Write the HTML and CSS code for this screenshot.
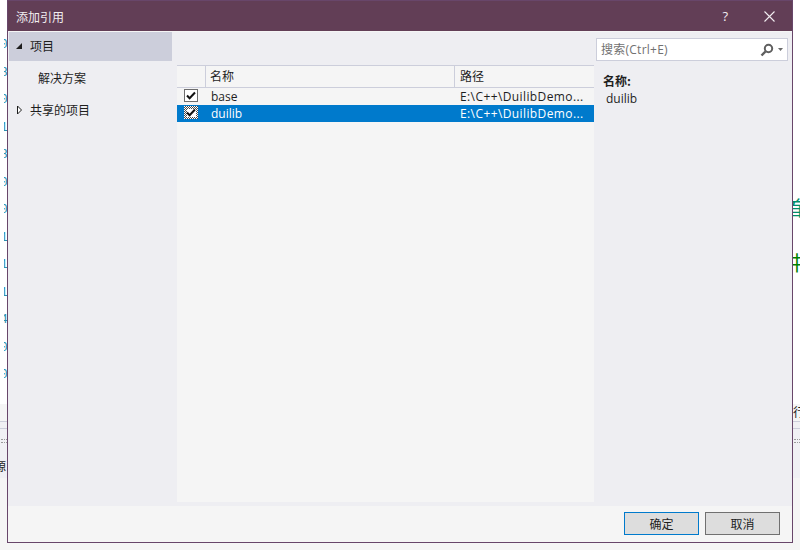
FILE: index.html
```html
<!DOCTYPE html>
<html lang="zh">
<head>
<meta charset="utf-8">
<title>添加引用</title>
<link rel="stylesheet" href="styles.css">
</head>
<body>
<div class="backdrop">
  <div class="editor">
    <div class="gutter-digits">
      <span>0</span><span>8</span><span>0</span><span>1</span><span>8</span><span>0</span><span>0</span><span>1</span><span>1</span><span>1</span><span>4</span><span>0</span><span>0</span>
    </div>
    <span class="code-a">首</span>
    <span class="code-b">中</span>
  </div>
  <div class="tabbar"><span class="tab-right">行</span></div>
  <div class="strip"></div>
  <div class="panel">
    <span class="grip grip-left"></span>
    <span class="grip grip-right"></span>
    <span class="panel-text">源</span>
  </div>
  <div class="lower"></div>
</div>

<div class="dialog">
  <header class="titlebar">
    <span class="title">添加引用</span>
    <span class="help">?</span>
    <svg class="close" width="11" height="11" viewBox="0 0 11 11"><path d="M.5.500l10 10M10.500.500l-10 10" stroke="#f1edf0" stroke-width="1.100" fill="none"/></svg>
  </header>
  <div class="body">
    <nav class="nav">
      <div class="nav-row nav-selected">
        <svg class="arrow" width="8" height="8" viewBox="0 0 8 8"><path d="M7 1v6H1z" fill="#1e1e1e"/></svg>
        <span>项目</span>
      </div>
      <div class="nav-row nav-child"><span>解决方案</span></div>
      <div class="nav-row">
        <svg class="arrow" width="8" height="10" viewBox="0 0 8 10"><path d="M2.500 1l4 4-4 4z" fill="#fff" stroke="#1e1e1e"/></svg>
        <span>共享的项目</span>
      </div>
    </nav>
    <main class="center">
      <div class="list">
        <div class="list-head">
          <div class="cell-check"></div>
          <div class="cell-name">名称</div>
          <div class="cell-path">路径</div>
        </div>
        <div class="list-row">
          <div class="cell-check">
            <svg width="14" height="13" viewBox="0 0 14 13"><rect x=".5" y=".5" width="13" height="12" fill="#fff" stroke="#6d6d6d"/><path d="M3 6.500l2.600 2.800L11 3.500" fill="none" stroke="#111" stroke-width="2"/></svg>
          </div>
          <div class="cell-name">base</div>
          <div class="cell-path">E:\C++\DuilibDemo...</div>
        </div>
        <div class="list-row list-selected">
          <div class="cell-check">
            <svg width="14" height="13" viewBox="0 0 14 13"><defs><pattern id="dots" width="2" height="2" patternUnits="userSpaceOnUse"><rect width="1" height="1" fill="#fff"/><rect x="1" y="1" width="1" height="1" fill="#fff"/></pattern></defs><rect width="14" height="13" fill="#4a4a4a"/><rect width="14" height="13" fill="url(#dots)"/><rect x="3" y="3" width="9" height="8" fill="#fff"/><path d="M3 6.500l2.600 2.800L11 3.500" fill="none" stroke="#111" stroke-width="2"/></svg>
          </div>
          <div class="cell-name">duilib</div>
          <div class="cell-path">E:\C++\DuilibDemo...</div>
        </div>
      </div>
    </main>
    <aside class="side">
      <div class="search">
        <span class="search-text">搜索(Ctrl+E)</span>
        <svg class="search-icon" width="14" height="14" viewBox="0 0 14 14"><circle cx="8.500" cy="5.500" r="3.700" fill="none" stroke="#5f5f5f" stroke-width="2"/><path d="M5.500 8.500L1.500 12.500" stroke="#5f5f5f" stroke-width="2.400"/></svg>
        <svg class="search-drop" width="5" height="3" viewBox="0 0 5 3"><path d="M0 0h5L2.500 3z" fill="#6a6a6a"/></svg>
      </div>
      <div class="detail-label">名称:</div>
      <div class="detail-value">duilib</div>
    </aside>
  </div>
  <footer class="footer">
    <button class="btn btn-default" type="button">确定</button>
    <button class="btn" type="button">取消</button>
  </footer>
</div>
</body>
</html>
```
FILE: styles.css
```css
* { box-sizing: border-box; }
html, body { margin: 0; padding: 0; }
body {
  width: 800px;
  height: 550px;
  overflow: hidden;
  background: #fff;
  position: relative;
  font-family: "Open Sans", "Noto Sans CJK SC", sans-serif;
  font-size: 12px;
  color: #1e1e1e;
}
.backdrop { display: flex; flex-direction: column; height: 550px; }
.editor { height: 404px; flex: none; position: relative; overflow: hidden; }
.gutter-digits {
  position: absolute; left: 4px; top: 31px; width: 3px; overflow: hidden;
  display: flex; flex-direction: column;
  font: 13px/27.500px "Liberation Mono", monospace; color: #2b91af;
}
.gutter-digits span { display: block; height: 27.500px; margin-left: -4px; }
.code-a, .code-b {
  position: absolute; font-family: "Noto Sans CJK SC", sans-serif;
  font-size: 20px; line-height: 24px;
}
.code-a { left: 784px; top: 196px; color: #008f6b; }
.code-b { left: 787px; top: 251px; color: #008000; }
.tabbar { height: 18px; flex: none; background: #f5f5f5; border-bottom: 1px solid #cccedb; position: relative; }
.tab-right { position: absolute; left: 793px; top: -1px; font-family: "Noto Sans CJK SC", sans-serif; font-size: 12px; line-height: 18px; }
.strip { height: 7px; flex: none; background: #f0f0f4; border-bottom: 1px solid #cccedb; }
.panel { height: 49px; flex: none; background: #f0f0f4; position: relative; overflow: hidden; }
.grip {
  position: absolute; top: 10px; width: 6px; height: 4px;
  border-top: 1px dotted #9a9a9a; border-bottom: 1px dotted #9a9a9a;
}
.grip-left { left: 1px; }
.grip-right { left: 794px; }
.panel-text { position: absolute; left: -6px; top: 29px; font-family: "Noto Sans CJK SC", sans-serif; color: #1e1e1e; line-height: 16px; }
.lower { flex: 1; background: #f5f5f5; }

.dialog {
  position: absolute; left: 7px; top: 0; width: 786px; height: 543px;
  border: 1px solid #68466a;
  background: #f5f5f5;
  display: flex; flex-direction: column;
}
.titlebar {
  height: 30px; flex: none; background: #623e56; color: #f1edf0;
  display: flex; align-items: center; padding: 0 17px 0 8px;
  font-family: "Noto Sans CJK SC", sans-serif;
}
.title { flex: 1; font-size: 12px; }
.help { margin-right: 36px; font-family: "Open Sans", sans-serif; font-size: 13px; }
.close { display: block; }
.body { flex: 1; min-height: 0; background: #eeeef2; display: flex; border-top: 1px solid #f5f5f5; }
.nav { width: 169px; flex: none; padding-left: 1px; font-family: "Noto Sans CJK SC", sans-serif; }
.nav-row { height: 32px; display: flex; align-items: center; width: 163px; padding: 0 0 1px 6px; }
.nav-selected { height: 29px; background: #cccedb; margin-bottom: 1px; padding-bottom: 2px; }
.nav-child { padding-left: 29px; padding-bottom: 2px; }
.arrow { margin-right: 7px; width: 8px; flex: none; }
.center { width: 417px; flex: none; padding: 33px 0 5px; }
.list { height: 437px; background: #f5f5f5; }
.list-head { display: flex; height: 23px; border-top: 1px solid #cccedb; border-bottom: 1px solid #cccedb; align-items: stretch; font-family: "Noto Sans CJK SC", sans-serif; }
.list-head .cell-name, .list-head .cell-path { padding-top: 0; line-height: 20px; }
.list-head .cell-name { padding-left: 4px; }
.list-head .cell-path { padding-left: 5px; border-left: 1px solid #cccedb; }
.list-head .cell-check { border-right: 1px solid #cccedb; }
.list-row { display: flex; height: 17px; line-height: 17px; align-items: center; }
.list-selected { background: #007acc; color: #fff; }
.cell-check { width: 29px; padding-left: 7px; flex: none; display: flex; align-items: flex-start; align-self: stretch; padding-top: 1px; }
.cell-check svg { display: block; }
.cell-name { width: 248px; flex: none; padding-left: 5px; }
.cell-path { flex: 1; padding-left: 6px; white-space: nowrap; overflow: hidden; }
.list-row .cell-path { letter-spacing: .4px; }
.side { flex: 1; padding: 6px 4px 0 2px; }
.search {
  height: 23px; width: 192px; background: #fff; border: 1px solid #cccedb;
  display: flex; align-items: center; padding: 0 4px 2px;
}
.search-text { flex: 1; color: #717171; letter-spacing: .25px; }
.search-icon { display: block; margin: 2px 4px 0 0; }
.search-drop { display: block; margin-top: 2px; }
.detail-label { margin: 11px 0 0 7px; font-weight: 700; line-height: 17px; font-family: "Noto Sans CJK SC", sans-serif; }
.detail-value { margin: 1px 0 0 10px; line-height: 17px; }
.footer { height: 36px; flex: none; display: flex; justify-content: flex-end; gap: 6px; padding: 6px 12px 0 0; background: #f5f5f5; }
.btn {
  width: 75px; height: 23px; padding: 0; background: #dddddd; border: 1px solid #707070;
  font-family: "Noto Sans CJK SC", sans-serif; font-size: 12px; color: #1e1e1e;
}
.btn-default { border-color: #007acc; }
```
